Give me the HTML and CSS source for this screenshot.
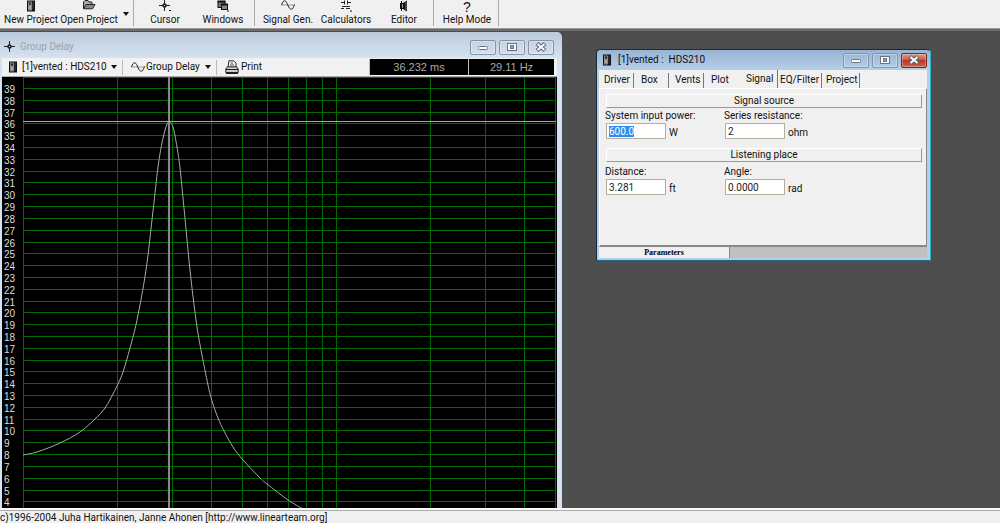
FILE: index.html
```html
<!DOCTYPE html>
<html lang="en">

<head>
    <meta charset="UTF-8">
    <meta name="viewport" content="width=device-width, initial-scale=1.0">
    <title>Group Delay</title>
    <link rel="stylesheet" href="styles.css">
</head>

<body>
    <svg class="sprite" aria-hidden="true">
        <symbol id="icon-box" viewBox="0 0 10 12">
            <rect x="1" y="0.5" width="8" height="11" fill="#111"/>
            <rect x="2" y="1.5" width="4" height="9" fill="#888"/>
            <rect x="3" y="2.5" width="2" height="2" fill="#222"/>
            <rect x="3" y="6" width="2" height="3" fill="#aaa"/>
            <rect x="6.5" y="1.5" width="1" height="8" fill="#444"/>
        </symbol>
        <symbol id="icon-cross" viewBox="0 0 12 12">
            <path d="M5.5 0V11M0 5.5H11" stroke="#222" fill="none"/>
            <path d="M5.5 2.5L8.5 5.5L5.5 8.5L2.5 5.5Z" fill="#222"/>
            <rect x="5" y="5" width="1" height="1" fill="#eee"/>
        </symbol>
        <symbol id="icon-wave" viewBox="0 0 14 10">
            <path d="M0 5H14" stroke="#999" fill="none"/>
            <path d="M0.5 5C1.5 2 2.5 0.8 3.5 0.8C5.5 0.8 6 4 7 5.5C8 8 9 9.2 10.3 9.2C12 9.2 12.5 7 13.5 4.5" stroke="#222" fill="none"/>
        </symbol>
        <symbol id="icon-min" viewBox="0 0 12 10">
            <rect x="1.5" y="4.5" width="9" height="3" rx="1" fill="#fff" stroke="#6b7280"/>
        </symbol>
        <symbol id="icon-max" viewBox="0 0 12 10">
            <rect x="1.5" y="1.5" width="9" height="7" fill="#fff" stroke="#6b7280"/>
            <rect x="4.5" y="3.5" width="3" height="3" fill="#8fa3bd" stroke="#6b7280"/>
        </symbol>
        <symbol id="icon-close" viewBox="0 0 12 10">
            <path d="M2 1.500L10 8.500M10 1.500L2 8.500" stroke="#5b6270" stroke-width="4" fill="none"/>
            <path d="M2.500 2L9.500 8M9.500 2L2.500 8" stroke="#fff" stroke-width="2" fill="none"/>
        </symbol>
    </svg>

    <header class="toolbar">
        <div class="tool-group">
            <button class="tool"><svg class="icon-box"><use href="#icon-box"/></svg>New Project</button>
            <button class="tool">
                <svg class="icon-open" viewBox="0 0 14 10">
                    <path d="M1.5 8.5V2L3 0.5H6L7 2H10V4" fill="#aaa" stroke="#222"/>
                    <path d="M1.5 8.8L4 4.5H13L10.5 8.8Z" fill="#888" stroke="#222"/>
                </svg>Open Project
            </button>
            <button class="drop" aria-label="Recent projects"></button>
        </div>
        <div class="tool-group tool-group-view">
            <button class="tool"><svg class="icon-cross" viewBox="0 0 12 12"><use href="#icon-cross"/><rect x="10" y="10" width="2" height="1" fill="#111"/></svg>Cursor</button>
            <button class="tool">
                <svg class="icon-cross" viewBox="0 0 12 12">
                    <rect x="1" y="1.5" width="7" height="6" fill="#777" stroke="#111"/>
                    <path d="M0.5 1.5H8.5" stroke="#111" stroke-width="2"/>
                    <rect x="4.5" y="4.5" width="6" height="5" fill="#888" stroke="#111"/>
                    <path d="M4 4.5H11" stroke="#111" stroke-width="2"/>
                    <rect x="10" y="10.5" width="2" height="1" fill="#111"/>
                </svg>Windows
            </button>
        </div>
        <div class="tool-group tool-group-calc">
            <button class="tool"><svg class="icon-wave"><use href="#icon-wave"/></svg>Signal Gen.</button>
            <button class="tool">
                <svg class="icon-cross" viewBox="0 0 12 12">
                    <path d="M1 2.5H5M7 2.5H11M4.500 0.5V4.5M7.500 0.5V4.5M2 6.5H10M1 8.5H4M6 8.500H10" stroke="#222" fill="none"/>
                    <rect x="10" y="10.5" width="2" height="1" fill="#111"/>
                </svg>Calculators
            </button>
            <button class="tool">
                <svg class="icon-cross" viewBox="0 0 12 12">
                    <path d="M2 3H5L9 0.5V11.5L5 9H2Z" fill="#111"/>
                    <path d="M3.5 1V11" stroke="#111"/>
                    <path d="M4.500 4V8" stroke="#999"/>
                    <path d="M8 2V10" stroke="#777"/>
                </svg>Editor
            </button>
        </div>
        <div class="tool-group tool-group-help">
            <button class="tool"><span class="help-mark">?</span>Help Mode</button>
        </div>
    </header>

    <main class="desktop">
        <section class="window graph-window">
            <div class="title-bar">
                <svg class="icon-cross"><use href="#icon-cross"/></svg>
                <h2 class="title title-inactive">Group Delay</h2>
                <div class="window-buttons">
                    <button aria-label="Minimize"><svg><use href="#icon-min"/></svg></button>
                    <button aria-label="Maximize"><svg><use href="#icon-max"/></svg></button>
                    <button aria-label="Close"><svg><use href="#icon-close"/></svg></button>
                </div>
            </div>
            <div class="graph-bar">
                <button class="project-pick"><svg class="icon-box"><use href="#icon-box"/></svg>[1]vented : HDS210<span class="arrow"></span></button>
                <button class="plot-pick"><svg class="icon-wave"><use href="#icon-wave"/></svg>Group Delay<span class="arrow"></span></button>
                <button class="print">
                    <svg class="icon-print" viewBox="0 0 14 14">
                        <path d="M3 7L4 0.8H8.5L11 3V7" fill="#fff" stroke="#222"/>
                        <path d="M5.5 3H8M5 5H9" stroke="#444"/>
                        <path d="M0.8 9L2.5 6.8H11.5L13.2 9V12.5H0.8Z" fill="#ccc" stroke="#222"/>
                        <path d="M1 9.5H13" stroke="#222"/>
                        <path d="M1 13H13" stroke="#222" stroke-width="2"/>
                    </svg>Print
                </button>
                <output class="readout">36.232 ms</output>
                <output class="readout readout-hz">29.11 Hz</output>
            </div>
            <svg class="graph" id="graph" role="img" aria-label="Group delay plot"></svg>
        </section>

        <section class="window params-window">
            <div class="title-bar">
                <svg class="icon-box"><use href="#icon-box"/></svg>
                <h2 class="title">[1]vented :&nbsp; HDS210</h2>
                <div class="window-buttons">
                    <button aria-label="Minimize"><svg><use href="#icon-min"/></svg></button>
                    <button aria-label="Maximize"><svg><use href="#icon-max"/></svg></button>
                    <button class="close" aria-label="Close"><svg><use href="#icon-close"/></svg></button>
                </div>
            </div>
            <div class="params">
                <nav class="tabs">
                    <button>Driver</button>
                    <button>Box</button>
                    <button>Vents</button>
                    <button>Plot</button>
                    <button class="active">Signal</button>
                    <button>EQ/Filter</button>
                    <button>Project</button>
                </nav>
                <form class="page">
                    <h3 class="section-head">Signal source</h3>
                    <div class="fields">
                        <div class="field">
                            <label for="power">System input power:</label>
                            <input id="power" value="600.0"><span>W</span>
                        </div>
                        <div class="field">
                            <label for="resistance">Series resistance:</label>
                            <input id="resistance" value="2"><span>ohm</span>
                        </div>
                    </div>
                    <h3 class="section-head">Listening place</h3>
                    <div class="fields fields-place">
                        <div class="field">
                            <label for="distance">Distance:</label>
                            <input id="distance" value="3.281"><span>ft</span>
                        </div>
                        <div class="field">
                            <label for="angle">Angle:</label>
                            <input id="angle" value="0.0000"><span>rad</span>
                        </div>
                    </div>
                </form>
                <div class="bottom-bar"><button>Parameters</button></div>
            </div>
        </section>
    </main>

    <footer class="status">c)1996-2004 Juha Hartikainen, Janne Ahonen [http://www.linearteam.org]</footer>

    <script src="graph.js"></script>
</body>

</html>
```
FILE: styles.css
```css
body {
    margin: 0;
    height: 100vh;
    display: flex;
    flex-direction: column;
    overflow: hidden;
    background-color: #f0f0f0;
    color: #111;
    font-family: Roboto, sans-serif;
    font-size: 10px;
    line-height: 12px;
}

.sprite {
    position: absolute;
    width: 0;
    height: 0;
}

button {
    padding: 0;
    border: none;
    background: none;
    color: inherit;
    font: inherit;
    white-space: nowrap;
}

h2,
h3 {
    margin: 0;
    font: inherit;
}

.icon-box {
    width: 10px;
    height: 12px;
    flex: none;
}

.icon-cross {
    width: 12px;
    height: 12px;
    flex: none;
}

.icon-wave {
    width: 14px;
    height: 10px;
    flex: none;
}

.icon-open {
    width: 14px;
    height: 10px;
}

.icon-print {
    width: 14px;
    height: 14px;
}

/* main toolbar */
.toolbar {
    display: flex;
    height: 28px;
    border-bottom: 1px solid #999;
}

.tool-group {
    display: flex;
    height: 26px;
    border-right: 1px solid #aaa;
}

.tool {
    width: 58px;
    display: flex;
    flex-direction: column;
    align-items: center;
    justify-content: space-between;
}

.tool-group:first-child {
    padding-left: 2px;
}

.tool-group-view {
    padding: 0 2px;
}

.tool-group-calc {
    padding-left: 4px;
}

.tool-group-help {
    padding: 0 2px 0 4px;
}

.drop {
    width: 15px;
}

.drop::before,
.arrow {
    content: "";
    display: inline-block;
    border: 3px solid transparent;
    border-top: 4px solid #111;
    border-bottom: none;
}

.help-mark {
    font: 14px/14px "Liberation Sans", sans-serif;
}

/* windows */
.desktop {
    position: relative;
    flex: 1;
    overflow: hidden;
    background-color: #4e4e4e;
    border-top: 2px solid #6a6a6a;
}

.window {
    position: absolute;
    box-sizing: border-box;
    display: flex;
    flex-direction: column;
}

.title-bar {
    display: flex;
    align-items: center;
}

.title {
    flex: 1;
}

.title-inactive {
    color: #9aa2aa;
}

.window-buttons {
    display: flex;
    gap: 3px;
}

.window-buttons button {
    width: 26px;
    height: 15px;
    box-sizing: border-box;
    display: flex;
    align-items: center;
    justify-content: center;
    border: 1px solid #8394ab;
    border-radius: 2px;
    box-shadow: inset 0 0 0 1px rgba(255, 255, 255, 0.3);
}

.window-buttons svg {
    width: 12px;
    height: 10px;
}

.window-buttons .close {
    border-color: #6b2a24;
    background: linear-gradient(#dc9a90, #c8503e 50%, #b83622 50%, #d0604a);
}

.graph-window {
    left: 0;
    top: 1px;
    bottom: 0;
    width: 562px;
    padding: 0 5px 0 2px;
    background: linear-gradient(#bccbdc, #d5e2f0 26px);
    border-top-right-radius: 5px;
}

.graph-window .title-bar {
    height: 26px;
    padding: 4px 3px 0 2px;
    box-sizing: border-box;
    gap: 4px;
}

.graph-bar {
    display: flex;
    align-items: center;
    height: 18px;
    padding-right: 3px;
    background-color: #f2f2f2;
    border-bottom: 1px solid #aaa;
}

.graph-bar button {
    display: flex;
    align-items: center;
    gap: 4px;
    height: 15px;
    border-right: 1px solid #bbb;
}

.graph-bar .arrow {
    margin-left: auto;
}

.graph-bar .project-pick {
    width: 121px;
    box-sizing: border-box;
    padding: 0 6px;
}

.graph-bar .plot-pick {
    width: 94px;
    box-sizing: border-box;
    padding: 0 5px 0 8px;
    gap: 1px;
}

.graph-bar .print {
    padding-left: 8px;
    gap: 2px;
    border: none;
    margin-right: auto;
}

.readout {
    width: 98px;
    height: 16px;
    line-height: 16px;
    background-color: #000;
    color: #aaa;
    border-left: 1px solid #bbb;
    text-align: center;
    font-family: "Liberation Sans", sans-serif;
    font-size: 11px;
}

.readout-hz {
    width: 85px;
}

/* group delay plot */
.graph {
    width: 100%;
    flex: 1;
    min-height: 0;
    background-color: #000;
}

.grid-line {
    stroke: #006c00;
    fill: none;
}

.scale {
    fill: #ddd;
    font-family: "Liberation Sans", sans-serif;
    font-size: 10px;
}

.curve {
    stroke: #aaa;
    fill: none;
}

.cursor-line {
    stroke: #888;
    stroke-width: 2;
    fill: none;
}

.cursor-level {
    stroke: #aaa;
    fill: none;
}

/* project parameters */
.params-window {
    left: 596px;
    top: 18px;
    width: 335px;
    padding: 0 3px 2px 2px;
    background: linear-gradient(#98b4d3, #b5cfea 20px);
    border: 1px solid #1b2a33;
    border-right-color: #28b4cc;
    border-bottom-color: #1d6a80;
    border-radius: 4px 4px 0 0;
}

.params-window .title-bar {
    height: 20px;
    padding-left: 3px;
    gap: 6px;
}

.params {
    background-color: #f0f0f0;
}

.tabs {
    display: flex;
    align-items: flex-end;
    height: 18px;
}

.tabs button {
    width: 35px;
    height: 15px;
    box-sizing: border-box;
    padding-left: 7px;
    padding-bottom: 1px;
    text-align: left;
    border-right: 1px solid #777;
}

.tabs button:first-child {
    padding-left: 5px;
}

.tabs button:nth-child(3) {
    padding-left: 6px;
}

.tabs button:nth-child(4) {
    border: none;
}

.tabs .active {
    width: 39px;
    height: 18px;
}

.tabs button:nth-child(6) {
    width: 44px;
    padding-left: 2px;
}

.tabs button:last-child {
    width: 38px;
    padding-left: 4px;
}

.page {
    height: 151px;
    padding: 5px 4px 0 5px;
    border: 1px solid #fff;
    border-right-color: #888;
    border-bottom: 2px solid #888;
}

.section-head {
    height: 12px;
    line-height: 12px;
    margin-left: 1px;
    text-align: center;
    border: 1px solid #fff;
    border-right-color: #999;
    border-bottom-color: #999;
}

.fields {
    display: flex;
    height: 39px;
    padding-top: 1px;
}

.fields-place {
    padding-top: 3px;
}

.field {
    width: 119px;
}

.field label {
    display: block;
    height: 14px;
    line-height: 14px;
}

.field input {
    width: 60px;
    height: 16px;
    box-sizing: border-box;
    margin: 0 3px 0 1px;
    padding: 0 2px;
    border: 1px solid #b5ad9e;
    outline: none;
    background-color: #fff;
    color: #222;
    font: inherit;
    vertical-align: top;
}

.field input::selection {
    background-color: #2f8ff0;
    color: #fff;
}

.field span {
    line-height: 20px;
}

.bottom-bar {
    display: flex;
    height: 11px;
    background-color: #c0c0c0;
}

.bottom-bar button {
    width: 131px;
    background-color: #f0f0f0;
    border-right: 1px solid #888;
    color: #000;
    font: bold 8px/11px "Liberation Serif", serif;
}

/* status bar */
.status {
    height: 13px;
    border-top: 2px solid #fafafa;
    background-color: #f0f0f0;
    box-shadow: inset 0 1px #aaa;
    line-height: 15px;
    white-space: nowrap;
}
```
FILE: graph.js
```javascript
const graph = document.getElementById('graph');

const LEFT = 21;
const RIGHT = 554;
const DECADE = 313;
const STEP = 11.81;

const curve = [
    [21, 378], [35, 375], [58, 366], [78, 355], [93, 342], [103, 331], [111, 317],
    [116, 307], [121, 295], [128, 271], [135, 243], [144, 193], [151, 134], [156, 90],
    [160, 66], [164, 50], [167, 45], [171, 50], [175, 70], [178, 91], [182, 131],
    [188, 193], [194, 243], [199, 273], [206, 308], [210, 324], [216, 341], [222, 354],
    [231, 370], [241, 383], [258, 401], [265, 407], [286, 423], [301, 432]
];

function add(tag, attrs, text) {
    const el = document.createElementNS('http://www.w3.org/2000/svg', tag);
    for (const name in attrs) {
        el.setAttribute(name, attrs[name]);
    }
    if (text) {
        el.textContent = text;
    }
    graph.appendChild(el);
}

// y position of a delay in ms
function msToY(ms) {
    return 11 + (39 - ms) * STEP;
}

// x position of a frequency in Hz
function hzToX(hz) {
    return LEFT + Math.log10(hz / 10) * DECADE;
}

// smooth path through the points
function smoothPath(points) {
    let d = `M${points[0]}`;
    for (let i = 0; i < points.length - 1; i++) {
        const p0 = points[i - 1] || points[i];
        const p1 = points[i];
        const p2 = points[i + 1];
        const p3 = points[i + 2] || p2;
        d += `C${p1[0] + (p2[0] - p0[0]) / 6} ${p1[1] + (p2[1] - p0[1]) / 6}`;
        d += ` ${p2[0] - (p3[0] - p1[0]) / 6} ${p2[1] - (p3[1] - p1[1]) / 6} ${p2}`;
    }
    return d;
}

// horizontal lines with their scale
for (let ms = 39; ms >= 4; ms--) {
    const y = Math.round(msToY(ms)) + 0.5;
    add('path', { class: 'grid-line', d: `M${LEFT} ${y}H${RIGHT}` });
    add('text', { class: 'scale', x: 2, y: y + 4 }, String(ms));
}

// logarithmic frequency lines
for (const hz of [10, 20, 30, 40, 50, 60, 70, 80, 90, 100, 200, 300, 400, 500]) {
    const x = Math.round(hzToX(hz)) + 0.5;
    add('path', { class: 'grid-line', d: `M${x} 0V600` });
}
add('path', { class: 'grid-line', d: `M${LEFT} 0.5H${RIGHT}` });

add('path', { class: 'curve', d: smoothPath(curve) });

// cursor
add('path', { class: 'cursor-line', d: 'M167 0V600' });
add('path', { class: 'cursor-level', d: `M${LEFT} 44.5H${RIGHT}` });

// start with the input power ready to overwrite
const power = document.getElementById('power');
power.focus();
power.select();
```
